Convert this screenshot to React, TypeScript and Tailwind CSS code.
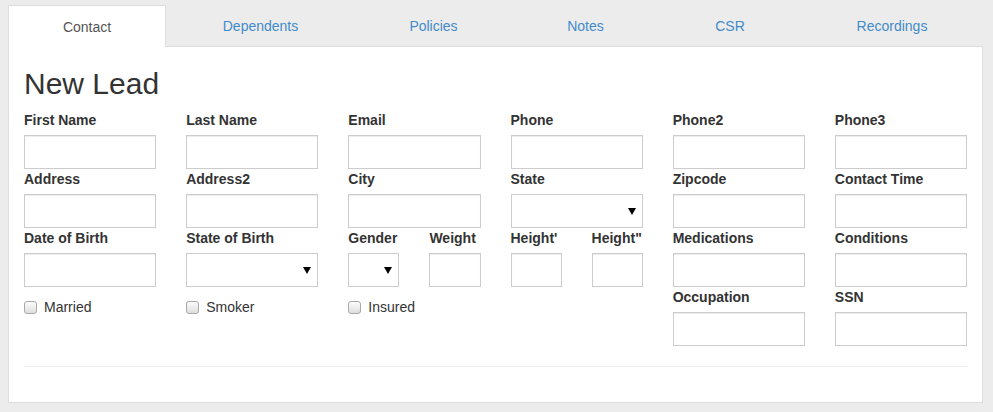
import React from "react";

const tabs = [
  { name: "Contact", w: "w-[158px]", active: true },
  { name: "Dependents", w: "w-[189px]" },
  { name: "Policies", w: "w-[157px]" },
  { name: "Notes", w: "w-[147px]" },
  { name: "CSR", w: "w-[142px]" },
  { name: "Recordings", w: "w-[182px]" },
];

function Label({ children }: { children: React.ReactNode }) {
  return <div className="h-[20px] leading-[20px] mb-[5px] font-bold text-[14px] text-[#333] whitespace-nowrap">{children}</div>;
}

function Input() {
  return <div className="h-[34px] border border-[#ccc] bg-white shadow-[inset_0_1px_1px_rgba(0,0,0,0.075)]" />;
}

function Select() {
  return (
    <div className="h-[34px] border border-[#ccc] bg-white flex items-center justify-end pr-[6px]">
      <svg width="8" height="7" viewBox="0 0 8 7">
        <polygon points="0,0 8,0 4,7" fill="#000" />
      </svg>
    </div>
  );
}

function Field({ label, select }: { label: string; select?: boolean }) {
  return (
    <div>
      <Label>{label}</Label>
      {select ? <Select /> : <Input />}
    </div>
  );
}

function Check({ label }: { label: string }) {
  return (
    <div className="pt-[10px]">
      <div className="h-[20px] flex items-center">
        <div className="w-[13px] h-[13px] rounded-[3px] border border-[#a9a9a9] bg-gradient-to-b from-[#fcfcfc] to-[#dedede]" />
        <span className="ml-[7px] text-[14px] leading-[20px] text-[#333]">{label}</span>
      </div>
    </div>
  );
}

export default function App() {
  return (
    <div className="min-h-[412px] bg-[#ececec] pt-[5px] pl-[8px] font-['Liberation_Sans',Arial,sans-serif] text-[14px] text-[#333]">
      <div className="w-[975px]">
        <ul className="flex h-[42px]">
          {tabs.map((t) => (
            <li
              key={t.name}
              className={
                t.active
                  ? `${t.w} h-[42px] bg-white border border-[#ddd] border-b-0 flex items-center justify-center text-[#555] leading-[20px]`
                  : `${t.w} h-[42px] border-b border-[#ddd] flex items-center justify-center text-[#428bca] leading-[20px]`
              }
            >
              {t.name}
            </li>
          ))}
        </ul>
        <div className="bg-white border border-t-0 border-[#ddd] px-[15px] pt-[20px]">
          <h2 className="mb-[10px] text-[30px] leading-[33px] font-normal text-[#333]">New Lead</h2>
          <div className="grid grid-cols-6 gap-x-[30px]">
            <Field label="First Name" />
            <Field label="Last Name" />
            <Field label="Email" />
            <Field label="Phone" />
            <Field label="Phone2" />
            <Field label="Phone3" />

            <Field label="Address" />
            <Field label="Address2" />
            <Field label="City" />
            <Field label="State" select />
            <Field label="Zipcode" />
            <Field label="Contact Time" />

            <Field label="Date of Birth" />
            <Field label="State of Birth" select />
            <div className="grid grid-cols-2 gap-x-[30px]">
              <Field label="Gender" select />
              <Field label="Weight" />
            </div>
            <div className="grid grid-cols-2 gap-x-[30px]">
              <Field label="Height'" />
              <Field label={'Height"'} />
            </div>
            <Field label="Medications" />
            <Field label="Conditions" />

            <Check label="Married" />
            <Check label="Smoker" />
            <Check label="Insured" />
            <div />
            <Field label="Occupation" />
            <Field label="SSN" />
          </div>
          <div className="mt-[20px] mb-[35px] h-px bg-[#eee]" />
        </div>
      </div>
    </div>
  );
}
